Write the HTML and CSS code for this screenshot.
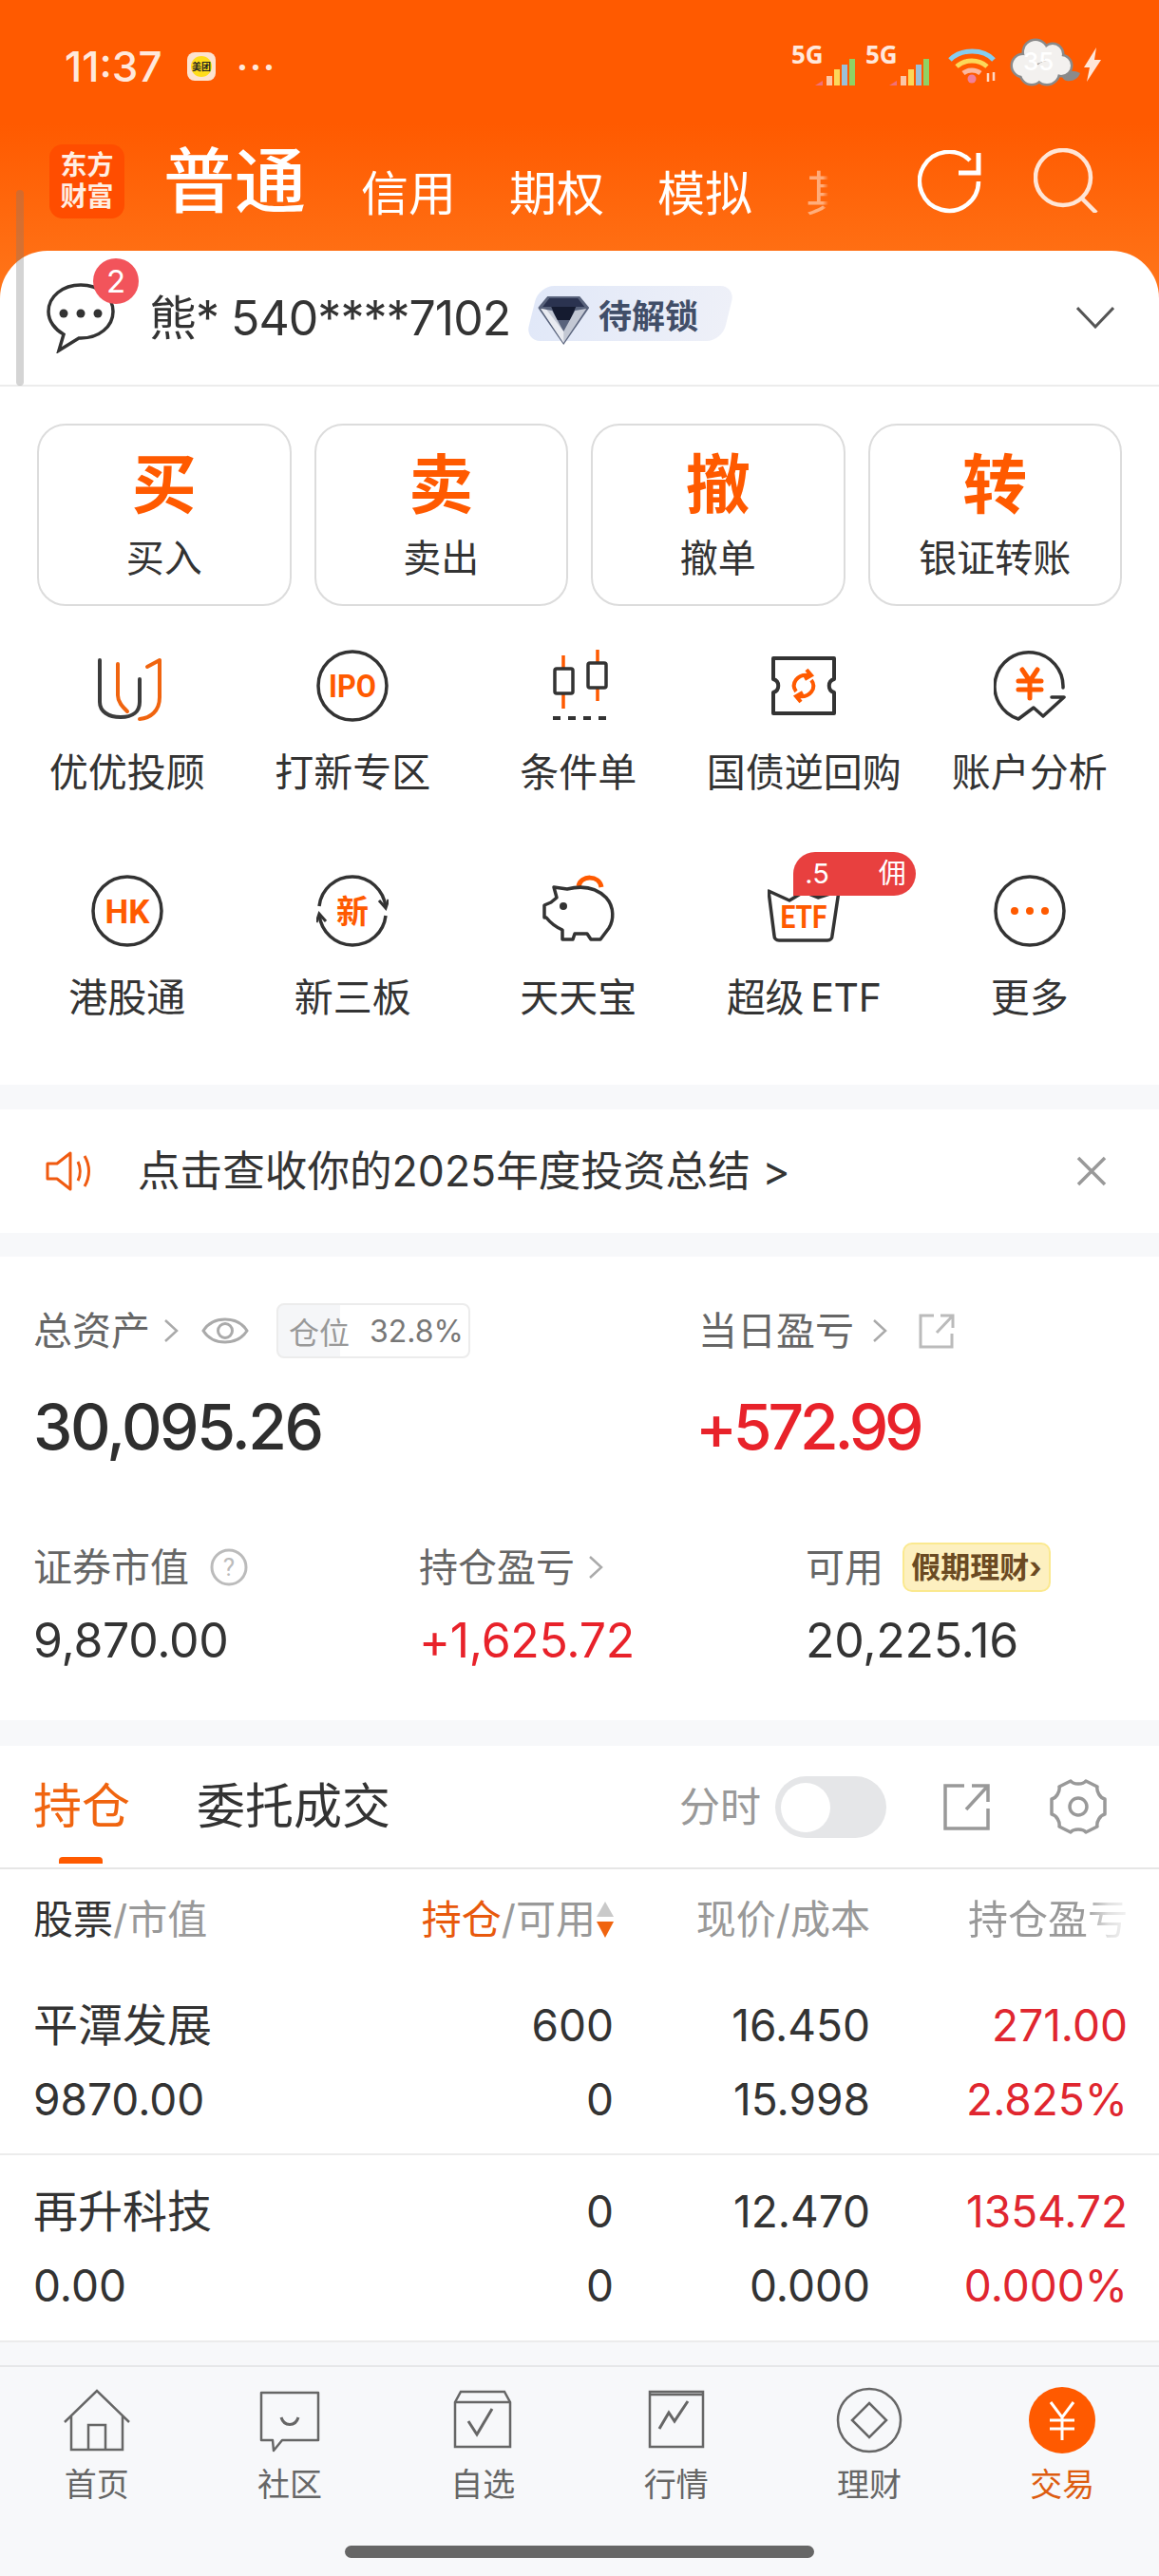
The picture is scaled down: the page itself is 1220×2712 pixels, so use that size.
FILE: index.html
```html
<!DOCTYPE html>
<html lang="zh">
<head>
<meta charset="utf-8">
<title>交易</title>
<link rel="stylesheet" href="styles.css">
</head>
<body>
<div class="phone">
  <div class="scrollbar"></div>

  <div class="status">
    <span class="time">11:37</span>
    <span class="app-dot"><span class="app-yellow">美团</span></span>
    <span class="more-dots">···</span>
    <span class="status-right">
      <span class="net"><span class="net-g">5G</span>
        <svg class="bars" viewBox="0 0 42 28"><path d="M0 28 8 23v5z" fill="#f0707a"/><rect x="12" y="18" width="6" height="10" fill="#fbc6a6"/><rect x="20" y="11" width="6" height="17" fill="#fcd85a"/><rect x="28" y="6" width="6" height="22" fill="#9cc0d8"/><rect x="36" y="0" width="6" height="28" fill="#8fd264"/></svg>
      </span>
      <span class="net"><span class="net-g">5G</span>
        <svg class="bars" viewBox="0 0 42 28"><path d="M0 28 8 23v5z" fill="#f0707a"/><rect x="12" y="18" width="6" height="10" fill="#fbc6a6"/><rect x="20" y="11" width="6" height="17" fill="#fcd85a"/><rect x="28" y="6" width="6" height="22" fill="#9cc0d8"/><rect x="36" y="0" width="6" height="28" fill="#8fd264"/></svg>
      </span>
      <svg class="wifi" viewBox="0 0 52 38" fill="none"><path d="M2 13C14 1 37 1 48 13" stroke="#86cdf0" stroke-width="5"/><path d="M9 20c9-8 23-8 32 0" stroke="#fcd85a" stroke-width="5"/><path d="M16 27c5-4 13-4 18 0" stroke="#fbb9a0" stroke-width="5"/><circle cx="25" cy="33" r="4.500" fill="#f0809a"/><path d="M42 27v9M48 26v9" stroke="#ffd9c4" stroke-width="2.500"/></svg>
      <span class="cloud-wrap">
        <svg class="cloud" viewBox="0 0 74 52"><path d="M54 38c6-4 14-4 20-1-2 6-8 9-14 8-3 0-5-3-6-7z" fill="#8a8a8a"/><g fill="#8a8a8a" stroke="#8a8a8a" stroke-width="5"><circle cx="14" cy="29" r="11"/><circle cx="27" cy="15" r="12"/><circle cx="45" cy="17" r="10"/><circle cx="54" cy="29" r="10"/><circle cx="39" cy="36" r="12"/><circle cx="23" cy="37" r="11"/></g><g fill="#f3f1ef"><circle cx="14" cy="29" r="11"/><circle cx="27" cy="15" r="12"/><circle cx="45" cy="17" r="10"/><circle cx="54" cy="29" r="10"/><circle cx="39" cy="36" r="12"/><circle cx="23" cy="37" r="11"/></g></svg>
        <span class="cloud-num">35</span>
      </span>
      <svg class="bolt" viewBox="0 0 21 36"><path d="M15 0 2 21h6L5 36 20 13h-7z" fill="#ffe6d8"/></svg>
    </span>
  </div>

  <div class="nav">
    <div class="logo"><span>东方</span><span>财富</span></div>
    <div class="nav-main">普通</div>
    <div class="nav-tabs">
      <span class="nav-tab">信用</span>
      <span class="nav-tab">期权</span>
      <span class="nav-tab">模拟</span>
      <span class="nav-tab nav-fade">其他</span>
    </div>
    <svg class="nav-icon" viewBox="0 0 68 68" fill="none" stroke="#fff" stroke-width="4.500"><path d="M64 33A31 31 0 1 1 55 11"/><path d="M43 24h21V3" stroke-width="5"/></svg>
    <svg class="nav-icon nav-search" viewBox="0 0 68 68" fill="none" stroke="#ffe5d6" stroke-width="4.500"><circle cx="31" cy="31" r="29"/><path d="M50 52 66 68"/></svg>
  </div>

  <main class="card">
    <div class="account">
      <span class="msg">
        <svg class="msg-icon" viewBox="0 0 72 74" fill="none"><path d="M36 2C17 2 2 14 2 30c0 10 7 19 16 24l-5 17 21-13h2c19 0 34-12 34-28S55 2 36 2z" stroke="#333" stroke-width="3.500"/><circle cx="18" cy="32" r="4.500" fill="#333"/><circle cx="36" cy="32" r="4.500" fill="#333"/><circle cx="54" cy="32" r="4.500" fill="#333"/></svg>
        <span class="badge">2</span>
      </span>
      <span class="acc-name">熊* 540****7102</span>
      <span class="vip">
        <svg class="vip-gem" viewBox="0 0 54 52"><path d="M10 1h34l10 12-27 39L0 13z" fill="#59637c"/><path d="M12 3h30l7 9H5z" fill="#2b3350"/><path d="M14 12h26l-6 14H20z" fill="#151b30"/><path d="M3 14l12 2 12 22 12-22 12-2-24 36z" fill="#c3c8d4"/><path d="M27 38v12L3 14l6 1z" fill="#e9ebf1"/></svg>
        <span class="vip-text">待解锁</span>
      </span>
      <svg class="chev" viewBox="0 0 40 24" fill="none"><path d="M1 2 20 22 39 2" stroke="#555" stroke-width="3"/></svg>
    </div>

    <div class="actions">
      <div class="act"><b>买</b><span>买入</span></div>
      <div class="act"><b>卖</b><span>卖出</span></div>
      <div class="act"><b>撤</b><span>撤单</span></div>
      <div class="act"><b>转</b><span>银证转账</span></div>
    </div>

    <div class="svc-grid">
      <div class="svc">
        <svg class="svc-icon" viewBox="0 0 76 76" fill="none" stroke-linecap="round"><path d="M9 11V55C9 65 18 71 31 71S51 65 51 55V31" stroke="#3c3c3c" stroke-width="4"/><path d="M28 15V48C28 55 33 60 38 65" stroke="#f0640f" stroke-width="4"/><path d="M59 18 72 11V50C72 65 62 72 51 73" stroke="#f0640f" stroke-width="4" stroke-linejoin="round"/></svg>
        <span>优优投顾</span>
      </div>
      <div class="svc">
        <svg class="svc-icon" viewBox="0 0 76 76" fill="none"><circle cx="38" cy="38" r="36" stroke="#333" stroke-width="3.500"/><text x="38" y="50" class="icon-txt" font-size="33" textLength="50" lengthAdjust="spacingAndGlyphs">IPO</text></svg>
        <span>打新专区</span>
      </div>
      <div class="svc">
        <svg class="svc-icon" viewBox="0 0 76 76" fill="none"><path d="M22 6v56M58 0v54" stroke="#ff5a00" stroke-width="3.500"/><rect x="13" y="20" width="19" height="26" rx="2" fill="#fff" stroke="#333" stroke-width="3.500"/><rect x="48" y="14" width="19" height="26" rx="2" fill="#fff" stroke="#333" stroke-width="3.500"/><path d="M11 72h56" stroke="#333" stroke-width="4" stroke-dasharray="8 8"/></svg>
        <span>条件单</span>
      </div>
      <div class="svc">
        <svg class="svc-icon" viewBox="0 0 76 76" fill="none"><path d="M6 9h64v22c-7 2-7 12 0 14v22H6V45c7-2 7-12 0-14z" stroke="#333" stroke-width="4" stroke-linejoin="round"/><path d="M30 44c-6-8 1-19 14-17M46 32c6 8-1 19-14 17M41 21l5 6-7 4M35 55l-5-6 7-4" stroke="#ff5a00" stroke-width="4"/></svg>
        <span>国债逆回购</span>
      </div>
      <div class="svc">
        <svg class="svc-icon" viewBox="0 0 76 76" fill="none"><path d="M73 40A36 36 0 1 0 26 73L42 61 52 70 74 50H61" stroke="#333" stroke-width="3.500" stroke-linejoin="round" stroke-linecap="round"/><path d="M30 21l8 12 8-12M26 33h24M26 42h24M38 33v18" stroke="#ff5a00" stroke-width="5" stroke-linecap="round"/></svg>
        <span>账户分析</span>
      </div>
      <div class="svc">
        <svg class="svc-icon" viewBox="0 0 76 76" fill="none"><circle cx="38" cy="38" r="36" stroke="#333" stroke-width="3.500"/><text x="38" y="51" class="icon-txt" font-size="35" textLength="47" lengthAdjust="spacingAndGlyphs">HK</text></svg>
        <span>港股通</span>
      </div>
      <div class="svc">
        <svg class="svc-icon" viewBox="0 0 76 76" fill="none"><path d="M3 33C5 15 20 2 38 2c18 0 33 14 35 32M73 43C71 61 56 74 38 74 20 74 5 60 3 42" stroke="#333" stroke-width="3.500"/><path d="M66 27l7 8 3-9M10 49 3 41 0 50" stroke="#333" stroke-width="3"/><text x="38" y="51" class="icon-txt" font-size="34">新</text></svg>
        <span>新三板</span>
      </div>
      <div class="svc">
        <svg class="svc-icon" viewBox="0 0 76 76" fill="none"><path d="M38 12C40 0 60 0 62 13" stroke="#ff5a00" stroke-width="5"/><path d="M12 13 26 15C42 11 56 13 67 24 76 34 75 48 70 56L61 68H51L47 62H34L32 68H21V58C14 55 8 50 4 45H2V32L9 29 15 24z" stroke="#333" stroke-width="3.500" stroke-linejoin="round"/><circle cx="22" cy="33" r="4" fill="#333"/></svg>
        <span>天天宝</span>
      </div>
      <div class="svc">
        <span class="etf-wrap">
          <svg class="svc-icon" viewBox="0 0 76 76" fill="none"><path d="M1 17 23 27 38 18 53 24 75 17 68 64C68 67 66 69 63 69H12C9 69 7 67 7 64z" stroke="#333" stroke-width="3.500" stroke-linejoin="round"/><text x="38" y="56" class="icon-txt" font-size="33" textLength="49" lengthAdjust="spacingAndGlyphs">ETF</text></svg>
          <span class="etf-tag"><span class="etf-clip">.5<i class="etf-gap"></i>佣金</span></span>
        </span>
        <span class="svc-tight">超级 ETF</span>
      </div>
      <div class="svc">
        <svg class="svc-icon" viewBox="0 0 76 76" fill="none"><circle cx="38" cy="38" r="36" stroke="#333" stroke-width="3.500"/><circle cx="22" cy="38" r="4" fill="#ff5a00"/><circle cx="38" cy="38" r="4" fill="#ff5a00"/><circle cx="54" cy="38" r="4" fill="#ff5a00"/></svg>
        <span>更多</span>
      </div>
    </div>

    <div class="sep sep-a"></div>

    <div class="notice">
      <svg class="speaker" viewBox="0 0 48 44" fill="none" stroke="#f05a10" stroke-width="3"><path d="M2 14h10L26 3v38L12 30H2z" stroke-linejoin="round"/><path d="M34 12c3 6 3 14 0 20M41 6c6 10 6 22 0 32"/></svg>
      <span class="notice-text">点击查收你的2025年度投资总结 &gt;</span>
      <svg class="close" viewBox="0 0 32 32" fill="none" stroke="#999" stroke-width="3.500"><path d="M2 2 30 30M30 2 2 30"/></svg>
    </div>

    <div class="sep sep-b"></div>

    <section class="assets">
      <div class="asset-top">
        <div class="label-row">
          <span class="label">总资产</span>
          <svg class="gt" viewBox="0 0 16 26" fill="none"><path d="M2 2 14 13 2 24" stroke="#aaa" stroke-width="2.500"/></svg>
          <svg class="eye" viewBox="0 0 50 34" fill="none" stroke="#aaa" stroke-width="3"><path d="M2 17C12 1 38 1 48 17 38 33 12 33 2 17z"/><circle cx="25" cy="17" r="7.500"/></svg>
          <span class="pos"><span class="pos-k">仓位</span><span class="pos-v">32.8%</span></span>
        </div>
        <div class="label-row">
          <span class="label">当日盈亏</span>
          <svg class="gt gt-wide" viewBox="0 0 16 26" fill="none"><path d="M2 2 14 13 2 24" stroke="#aaa" stroke-width="2.500"/></svg>
          <svg class="share-s" viewBox="0 0 38 38" fill="none" stroke="#bbb" stroke-width="3"><path d="M16 3H2v33h33V22M23 3h13v13M36 3 19 21"/></svg>
        </div>
      </div>
      <div class="asset-top asset-big">
        <div class="big">30,095.26</div>
        <div class="big big-red red">+572.99</div>
      </div>
      <div class="asset-sub label-gap">
        <div class="label-row">
          <span class="label">证券市值</span>
          <svg class="q" viewBox="0 0 40 40" fill="none"><circle cx="20" cy="20" r="18" stroke="#bbb" stroke-width="3"/><text x="20" y="29" class="q-txt">?</text></svg>
        </div>
        <div class="label-row"><span class="label">持仓盈亏</span>
          <svg class="gt" viewBox="0 0 16 26" fill="none"><path d="M2 2 14 13 2 24" stroke="#aaa" stroke-width="2.500"/></svg>
        </div>
        <div class="label-row"><span class="label">可用</span><span class="holiday">假期理财›</span></div>
      </div>
      <div class="asset-sub val-gap">
        <div class="mid">9,870.00</div>
        <div class="mid red">+1,625.72</div>
        <div class="mid">20,225.16</div>
      </div>
    </section>

    <div class="sep sep-c"></div>

    <div class="tabs">
      <span class="tab tab-on">持仓</span>
      <span class="tab">委托成交</span>
      <span class="tabs-right">
        <span class="fenshi">分时</span>
        <span class="toggle"><span class="knob"></span></span>
        <svg class="share" viewBox="0 0 50 50" fill="none" stroke="#999" stroke-width="3.500"><path d="M22 3H2v45h45V27M30 3h17v17M47 3 24 28"/></svg>
        <svg class="gear" viewBox="0 0 60 58" fill="none" stroke="#999" stroke-width="3.500"><path d="M22 2c3 4 13 4 16 0l12 6c-1 5 3 12 8 13v16c-5 1-9 8-8 13l-12 6c-3-4-13-4-16 0L10 50c1-5-3-12-8-13V21c5-1 9-8 8-13z" stroke-linejoin="round"/><circle cx="30" cy="29" r="9"/></svg>
      </span>
    </div>

    <div class="t-head">
      <span><em>股票</em>/市值</span>
      <span class="r"><i>持仓</i>/可用<svg class="sort" viewBox="0 0 18 38"><path d="M9 0 18 16H0z" fill="#c9c9c9"/><path d="M0 21h18L9 38z" fill="#f0640f"/></svg></span>
      <span class="r">现价/成本</span>
      <span class="r t-fade">持仓盈亏</span>
    </div>

    <div class="t-row t-row-a">
      <span class="name">平潭发展</span><span class="r">600</span><span class="r">16.450</span><span class="r pl">271.00</span>
      <span>9870.00</span><span class="r">0</span><span class="r">15.998</span><span class="r pl">2.825%</span>
    </div>
    <div class="t-row t-row-b">
      <span class="name">再升科技</span><span class="r">0</span><span class="r">12.470</span><span class="r pl">1354.72</span>
      <span>0.00</span><span class="r">0</span><span class="r">0.000</span><span class="r pl">0.000%</span>
    </div>

    <div class="sep sep-d"></div>
  </main>

  <nav class="tabbar">
    <div class="tb">
      <svg class="tb-icon" viewBox="0 0 72 70" fill="none" stroke="#666" stroke-width="2.500"><path d="M2 37 36 4l34 33M9 31v35h54V31M27 66V40h18v26"/></svg>
      <span>首页</span>
    </div>
    <div class="tb">
      <svg class="tb-icon" viewBox="0 0 72 70" fill="none" stroke="#666" stroke-width="2.500"><path d="M6 6h60v50H28l-9 11-1-11H6z" stroke-linejoin="round"/><path d="M27 32c3 10 15 10 18 0" stroke-width="3"/></svg>
      <span>社区</span>
    </div>
    <div class="tb">
      <svg class="tb-icon" viewBox="0 0 72 70" fill="none" stroke="#666" stroke-width="2.500"><path d="M7 16 13 5h46l6 11v47H7zM7 16h58"/><path d="M21 36l9 14 16-27" stroke-width="3"/></svg>
      <span>自选</span>
    </div>
    <div class="tb">
      <svg class="tb-icon" viewBox="0 0 72 70" fill="none" stroke="#666" stroke-width="2.500"><path d="M8 5h56v58H8zM8 8h56"/><path d="M18 44l10-17 6 9 14-21" stroke-width="3"/></svg>
      <span>行情</span>
    </div>
    <div class="tb">
      <svg class="tb-icon" viewBox="0 0 72 70" fill="none" stroke="#666" stroke-width="2.500"><circle cx="36" cy="35" r="33"/><path d="M36 17 54 35 36 53 18 35z"/></svg>
      <span>理财</span>
    </div>
    <div class="tb tb-on">
      <svg class="tb-icon" viewBox="0 0 72 70" fill="none"><circle cx="36" cy="35" r="35" fill="#ff5a00"/><path d="M24 16l12 16 12-16M23 35h26M23 44h26M36 32v24" stroke="#fff" stroke-width="3"/></svg>
      <span>交易</span>
    </div>
  </nav>
  <div class="home-wrap"><div class="home"></div></div>
</div>
</body>
</html>
```
FILE: styles.css
```css
* { box-sizing: border-box; }
html, body { margin: 0; padding: 0; }
body {
  width: 1220px;
  height: 2712px;
  overflow: hidden;
  font-family: Inter, "Noto Sans CJK SC", sans-serif;
  color: #333;
  background: #fff;
}
.phone {
  position: relative;
  width: 1220px;
  height: 2712px;
  overflow: hidden;
  display: flex;
  flex-direction: column;
  background: linear-gradient(#ff5a00 0, #ff5a00 130px, #ff7a1e 340px) 0 0 / 100% 340px no-repeat #f7f8fa;
}
.scrollbar {
  position: absolute;
  left: 17px;
  top: 200px;
  width: 8px;
  height: 206px;
  border-radius: 4px;
  background: rgba(120, 120, 120, .32);
  z-index: 3;
}

/* status bar */
.status {
  height: 140px;
  display: flex;
  align-items: center;
  padding: 0 60px 0 68px;
  color: #ffe8dc;
}
.time { font-size: 44px; font-weight: 500; width: 129px; white-space: nowrap; }
.app-dot {
  width: 30px;
  height: 30px;
  border-radius: 8px;
  background: #fde3cf;
  display: flex;
  align-items: center;
  justify-content: center;
  margin-right: 22px;
}
.app-yellow {
  width: 22px;
  height: 22px;
  border-radius: 50%;
  background: #ffdd1a;
  color: #222;
  font-size: 10px;
  line-height: 22px;
  text-align: center;
  white-space: nowrap;
  font-weight: 700;
}
.more-dots { font-size: 36px; font-weight: 700; letter-spacing: 2px; line-height: 30px; }
.status-right { margin-left: auto; display: flex; align-items: flex-start; height: 60px; padding-top: 0; }
.net { position: relative; display: block; width: 78px; height: 44px; margin-top: 7px; }
.net-g { position: absolute; left: 0; top: -3px; font: 700 26px/26px "Noto Sans", sans-serif; color: #ffe8dc; }
.bars { position: absolute; left: 25px; top: 15px; width: 42px; height: 28px; }
.wifi { width: 52px; height: 38px; margin: 10px 13px 0 9px; }
.cloud-wrap { position: relative; width: 74px; height: 52px; display: block; }
.cloud { width: 74px; height: 52px; display: block; }
.cloud-num { position: absolute; left: 14px; top: 10px; font-size: 26px; line-height: 30px; color: #fff; font-weight: 500; }
.bolt { width: 21px; height: 36px; margin: 10px 0 0 2px; }

/* nav */
.nav { height: 124px; display: flex; align-items: center; padding-left: 52px; }
.logo {
  width: 79px;
  height: 78px;
  margin-bottom: 22px;
  border-radius: 14px;
  background: #ff4d00;
  color: #ffeee2;
  display: flex;
  flex-direction: column;
  align-items: center;
  justify-content: center;
  font-size: 28px;
  line-height: 33px;
  font-weight: 700;
}
.nav-main { margin: 0 0 22px 41px; font-size: 75px; line-height: 90px; color: #fff; font-weight: 500; width: 208px; }
.nav-tabs {
  display: flex;
  width: 492px;
  gap: 56px;
  overflow: hidden;
  white-space: nowrap;
  color: #fff;
  font-size: 50px;
  line-height: 70px;
  padding-top: 4px;
}
.nav-tab { flex: none; width: 100px; }
.nav-fade {
  color: rgba(255, 232, 216, .55);
  -webkit-mask-image: linear-gradient(90deg, #000 0, #000 18px, transparent 24px);
  mask-image: linear-gradient(90deg, #000 0, #000 18px, transparent 24px);
}
.nav-icon { width: 68px; height: 68px; margin: 0 0 20px 94px; flex: none; }
.nav-search { margin-left: 54px; margin-bottom: 24px; }

/* card */
.card { flex: none; background: #fff; border-radius: 50px 50px 0 0; }
.account {
  height: 143px;
  display: flex;
  align-items: center;
  border-bottom: 2px solid #ececec;
  padding-left: 49px;
}
.msg { position: relative; width: 72px; height: 74px; flex: none; }
.msg-icon { width: 72px; height: 74px; display: block; }
.badge {
  position: absolute;
  left: 49px;
  top: -26px;
  width: 48px;
  height: 48px;
  border-radius: 50%;
  background: #f2545b;
  color: #fff;
  font-size: 33px;
  line-height: 48px;
  text-align: center;
}
.acc-name { margin-left: 36px; font-size: 50px; line-height: 70px; letter-spacing: -1px; white-space: nowrap; width: 403px; color: #333; }
.vip {
  width: 207px;
  height: 58px;
  background: linear-gradient(90deg, #e1e8f8, #eef0f8);
  border-radius: 16px;
  transform: skewX(-14deg);
  display: flex;
  align-items: center;
  margin-top: -10px;
}
.vip-gem { width: 54px; height: 52px; margin-left: 8px; transform: skewX(14deg); margin-top: 14px; flex: none; }
.vip-text { margin-left: 8px; font-size: 35px; font-weight: 700; color: #414e68; transform: skewX(14deg); white-space: nowrap; }
.chev { width: 40px; height: 24px; margin-left: auto; margin-right: 47px; margin-top: -2px; }

.actions {
  display: grid;
  grid-template-columns: repeat(4, 1fr);
  gap: 24px;
  padding: 39px 39px 0;
}
.act {
  height: 192px;
  border: 2px solid #dcdcdc;
  border-radius: 30px;
  display: flex;
  flex-direction: column;
  align-items: center;
  padding-top: 20px;
}
.act b { font-size: 68px; line-height: 84px; font-weight: 700; color: #ff5a00; }
.act span { font-size: 40px; line-height: 56px; margin-top: 8px; color: #333; }

.svc-grid {
  display: grid;
  grid-template-columns: repeat(5, 237.500px);
  padding: 23px 0 0 15px;
}
.svc {
  height: 237px;
  padding-top: 23px;
  display: flex;
  flex-direction: column;
  align-items: center;
  font-size: 41px;
  line-height: 56px;
  white-space: nowrap;
}
.svc-tight { word-spacing: -4px; letter-spacing: -.4px; }
.svc-icon { width: 76px; height: 76px; display: block; margin-bottom: 25px; flex: none; }
.icon-txt { font-family: Roboto, "Noto Sans CJK SC", sans-serif; font-weight: 700; fill: #ff5a00; text-anchor: middle; }
.etf-wrap { position: relative; display: block; height: 101px; }
.etf-tag {
  position: absolute;
  left: 27px;
  top: -24px;
  width: 129px;
  height: 46px;
  background: #e8403f;
  border-radius: 24px 24px 24px 0;
  color: #fff;
  font-size: 29px;
  line-height: 46px;
  padding-left: 12px;
  overflow: hidden;
}
.etf-clip { display: block; width: 105px; overflow: hidden; white-space: nowrap; }
.etf-gap { display: inline-block; width: 52px; }

.sep { background: #f7f8fa; }
.sep-a { height: 26px; margin-top: 7px; }
.sep-b { height: 25px; }
.sep-c { height: 27px; }
.sep-d { height: 26px; border-top: 2px solid #ececec; }

.notice { height: 130px; display: flex; align-items: center; padding-left: 48px; }
.speaker { width: 48px; height: 44px; flex: none; }
.notice-text { margin-left: 49px; font-size: 44.600px; line-height: 60px; color: #333; white-space: nowrap; }
.close { width: 32px; height: 32px; margin-left: auto; margin-right: 55px; }

.assets { padding: 48px 0 49px 35px; }
.asset-top { display: grid; grid-template-columns: 700px 1fr; }
.asset-big { margin-top: 29px; }
.asset-sub { display: grid; grid-template-columns: 406px 407px 1fr; }
.label-gap { margin-top: 76px; }
.val-gap { margin-top: 12px; }
.label-row { display: flex; align-items: center; height: 60px; }
.label { font-size: 41px; line-height: 60px; color: #666; white-space: nowrap; }
.gt { width: 16px; height: 26px; margin-left: 14px; flex: none; }
.gt-wide { margin-left: 19px; }
.eye { width: 50px; height: 34px; margin-left: 24px; flex: none; }
.pos {
  margin-left: 29px;
  width: 204px;
  height: 58px;
  border: 2px solid #ececec;
  border-radius: 8px;
  display: flex;
  align-items: center;
  font-size: 32px;
  color: #777;
  background: linear-gradient(90deg, #f5f6f8 0, #f5f6f8 65px, #fff 65px);
  white-space: nowrap;
}
.pos-k { margin-left: 11px; width: 85px; color: #999; }
.share-s { width: 38px; height: 38px; margin-left: 33px; }
.q { width: 40px; height: 40px; margin-left: 22px; }
.q-txt { font-family: Roboto, sans-serif; font-size: 26px; fill: #bbb; text-anchor: middle; }
.holiday {
  margin-left: 20px;
  width: 156px;
  height: 52px;
  border-radius: 10px;
  background: #fdf0c0;
  border: 2px solid #fbe98f;
  color: #6b4a22;
  font-size: 31px;
  font-weight: 700;
  line-height: 48px;
  text-align: center;
  white-space: nowrap;
}
.big { font-size: 66px; line-height: 84px; font-weight: 500; color: #2e2e2e; letter-spacing: -2.500px; }
.big-red { letter-spacing: -4.200px; margin-left: -3px; }
.mid { font-size: 50px; line-height: 70px; color: #333; letter-spacing: -.3px; }
.red { color: #e8222a; }

.tabs {
  height: 130px;
  display: flex;
  align-items: center;
  border-bottom: 2px solid #e6e6e6;
  padding-left: 35px;
  position: relative;
  font-size: 51px;
  line-height: 70px;
}
.tab { margin-right: 70px; white-space: nowrap; }
.tab-on { color: #f0640f; position: relative; }
.tab-on::after {
  content: "";
  position: absolute;
  left: 27px;
  top: 88px;
  width: 46px;
  height: 7px;
  border-radius: 4px 4px 0 0;
  background: #ff5a00;
}
.tabs-right { margin-left: auto; display: flex; align-items: center; }
.fenshi { font-size: 43px; color: #999; width: 101px; }
.toggle {
  width: 117px;
  height: 65px;
  border-radius: 33px;
  background: #e5e6e8;
  padding: 7px 0 0 6px;
  display: block;
}
.knob { display: block; width: 52px; height: 52px; border-radius: 50%; background: #fff; }
.share { width: 50px; height: 50px; margin-left: 60px; }
.gear { width: 60px; height: 58px; margin: 0 55px 0 62px; }

.t-head, .t-row {
  display: grid;
  grid-template-columns: 1fr 270px 270px 271px;
  padding: 0 33px 0 35px;
  white-space: nowrap;
}
.r { text-align: right; }
.t-head { height: 104px; padding-top: 2px; align-items: center; font-size: 42px; line-height: 60px; color: #999; }
.t-head em { font-style: normal; color: #333; }
.t-head i { font-style: normal; color: #e8590c; }
.sort { width: 18px; height: 38px; margin-left: 1px; vertical-align: -4px; }
.t-fade {
  -webkit-mask-image: linear-gradient(270deg, rgba(0,0,0,.12) 0, rgba(0,0,0,.3) 20px, #000 45px);
  mask-image: linear-gradient(270deg, rgba(0,0,0,.12) 0, rgba(0,0,0,.3) 20px, #000 45px);
}
.t-row { font-size: 46px; line-height: 78px; color: #333; }
.name { font-size: 47px; }
.t-row-a { padding-top: 21px; padding-bottom: 18px; border-bottom: 2px solid #ececec; }
.t-row-b { padding-top: 20px; padding-bottom: 19px; }
.pl { color: #e0262f; }

.tabbar {
  flex: none;
  display: grid;
  grid-template-columns: repeat(6, 1fr);
  border-top: 2px solid #e6e7e9;
  padding: 21px 0 0;
  background: #f7f8fa;
}
.tb {
  display: flex;
  flex-direction: column;
  align-items: center;
  font-size: 34px;
  line-height: 50px;
  color: #666;
}
.tb-icon { width: 72px; height: 70px; margin-bottom: 8px; }
.tb-on { color: #dd5c10; }
.home-wrap { display: flex; justify-content: center; padding-top: 39px; background: #f7f8fa; flex: 1; }
.home { width: 494px; height: 13px; border-radius: 7px; background: #666; }
```
